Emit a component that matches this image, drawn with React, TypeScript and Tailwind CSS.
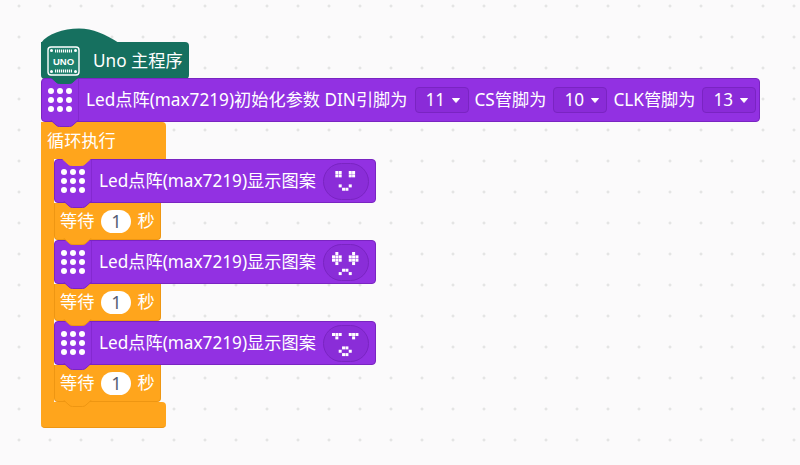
const GRIDS = {
  smile: ['.XX..XX.', '.XX..XX.', '........', '........', '..X..X..', '...XX...'],
  sad: ['.X....X.', 'XXX..XXX', 'XXX..XXX', '.X....X.', '........', '...XX...', '..X..X..'],
  surprised: ['XXX..XXX', '.X....X.', '........', '........', '...XX...', '..X..X..', '...XX...'],
}

function Notch({ color, stroke, className }: { color: string; stroke: string; className: string }) {
  return (
    <svg className={`absolute z-10 ${className}`} width="29" height="7" viewBox="0 0 29 7">
      <path d="M0.5 0 L6 5 Q7.5 6.5 9.5 6.5 H19.5 Q21.5 6.5 23 5 L28.5 0 Z" fill={color} />
      <path d="M0.5 0 L6 5 Q7.5 6.5 9.5 6.5 H19.5 Q21.5 6.5 23 5 L28.5 0" fill="none" stroke={stroke} />
    </svg>
  )
}

function Dots() {
  return (
    <div className="grid grid-cols-3 gap-[2.5px] w-[24px]">
      {Array.from({ length: 9 }).map((_, i) => (
        <span key={i} className="w-[6.3px] h-[6.3px] rounded-full bg-white" />
      ))}
    </div>
  )
}

function Face({ rows }: { rows: string[] }) {
  return (
    <div className="ml-[7px] w-[46px] h-[37px] rounded-full bg-[#8a2dd8] border border-[#7a24c2] flex items-start justify-center pt-[7px]">
      <svg width="27" height="24" viewBox="0 0 27 24">
        {rows.map((row, y) =>
          row.split('').map((c, x) =>
            c === 'X' ? <rect key={`${x}-${y}`} x={x * 3.35} y={y * 3.35} width="3" height="3" fill="#fff" /> : null,
          ),
        )}
      </svg>
    </div>
  )
}

function Select({ value }: { value: string }) {
  return (
    <div className="ml-[7px] mr-[6px] w-[54px] h-[26px] shrink-0 pl-[10px] flex items-center gap-[7px] rounded-[4px] bg-[#8a2bd8] border border-[#7a24c2]">
      <span>{value}</span>
      <svg width="8" height="5" viewBox="0 0 8 5"><path d="M0.5 0.5 H7.5 L4 4.5 Z" fill="#fff" stroke="#fff" strokeLinejoin="round" /></svg>
    </div>
  )
}

function PatternBlock({ rows }: { rows: string[] }) {
  return (
    <div className="relative w-[322px] h-[44px] flex items-center rounded-[4px] bg-[#9231e2] border border-[#7a24c2] text-white">
      <div className="w-[37px] h-full shrink-0 flex items-center pl-[6px] border-r border-[#8428d0]">
        <Dots />
      </div>
      <span className="ml-[7px] whitespace-nowrap">Led点阵(max7219)显示图案</span>
      <Face rows={rows} />
      <Notch color="#9231e2" stroke="#7a24c2" className="left-[8px] -bottom-[6px]" />
    </div>
  )
}

function WaitBlock() {
  return (
    <div className="relative w-[107px] h-[37px] flex items-center pl-[5px] rounded-b-[4px] bg-[#ffa51c] border-x border-b border-[#ee9612] text-white">
      <span>等待</span>
      <span className="ml-[7px] w-[30px] h-[23px] flex items-center justify-center rounded-full bg-white text-[18px] text-[#575e75]">1</span>
      <span className="ml-[6px]">秒</span>
      <Notch color="#ffa51c" stroke="#ee9612" className="left-[8px] -bottom-[6px]" />
    </div>
  )
}

export default function App() {
  return (
    <div className="w-[800px] h-[465px] overflow-hidden pl-[41px] pt-[42px] bg-[#fbfafb] bg-[radial-gradient(circle,#dcdcdc_1px,transparent_1.2px)] bg-[size:31px_31px] bg-[position:3.5px_-9.5px] font-['Noto_Sans','Noto_Sans_CJK_SC',sans-serif] text-[17.2px]">
      {/* 主程序 */}
      <div className="relative w-[148px] h-[37px] flex items-center rounded-r-[4px] rounded-bl-[4px] bg-[#16705f] text-white">
        <svg className="absolute left-0 -top-[14px]" width="78" height="15" viewBox="0 0 78 15">
          <path d="M0 15 C6 6 22 0.5 38 0.5 C52 0.5 64 6 78 15 Z" fill="#16705f" />
        </svg>
        <svg className="ml-[6px] shrink-0" width="33" height="30" viewBox="0 0 33 30">
          <rect x="1" y="1" width="31" height="28" rx="3" fill="#1e7f6c" stroke="#fff" strokeWidth="1.4" />
          <circle cx="4.5" cy="4.5" r="1.5" fill="#fff" />
          <circle cx="28.5" cy="4.5" r="1.5" fill="#fff" />
          <circle cx="4.5" cy="25.5" r="1.5" fill="#fff" />
          <circle cx="28.5" cy="25.5" r="1.5" fill="#fff" />
          <path d="M8 5 H25 M8 25 H25" stroke="#fff" strokeWidth="3" strokeDasharray="1.2 0.8" />
          <text x="16.5" y="18.7" textAnchor="middle" fontSize="9.5" fontWeight="700" fill="#fff" fontFamily="Liberation Sans, sans-serif">UNO</text>
        </svg>
        <span className="ml-[13px] whitespace-nowrap">Uno 主程序</span>
        <Notch color="#16705f" stroke="#16705f" className="left-[9px] -bottom-[5px]" />
      </div>

      {/* 初始化 */}
      <div className="relative -mt-[1px] w-[719px] h-[44px] flex items-center rounded-[4px] bg-[#9231e2] border border-[#7a24c2] text-white whitespace-nowrap">
        <div className="w-[37px] h-full shrink-0 flex items-center pl-[6px] border-r border-[#8428d0]">
          <Dots />
        </div>
        <span className="ml-[7px]">Led点阵(max7219)初始化参数 DIN引脚为</span>
        <Select value="11" />
        <span>CS管脚为</span>
        <Select value="10" />
        <span>CLK管脚为</span>
        <Select value="13" />
        <Notch color="#9231e2" stroke="#7a24c2" className="left-[8px] -bottom-[6px]" />
      </div>

      {/* 循环执行 */}
      <div className="w-[125px] h-[37px] flex items-center pl-[6px] rounded-tr-[4px] bg-[#ffa51c] text-white">循环执行</div>
      <div className="flex">
        <div className="w-[13px] shrink-0 bg-[#ffa51c]" />
        <div className="relative flex flex-col">
          <PatternBlock rows={GRIDS.smile} />
          <WaitBlock />
          <PatternBlock rows={GRIDS.sad} />
          <WaitBlock />
          <PatternBlock rows={GRIDS.surprised} />
          <WaitBlock />
          <Notch color="#ffa51c" stroke="#ffa51c" className="left-[8px] top-0" />
        </div>
      </div>
      <div className="w-[125px] h-[26px] rounded-b-[4px] rounded-tr-[4px] bg-[#ffa51c] border-b border-[#ee9612]" />
    </div>
  )
}
